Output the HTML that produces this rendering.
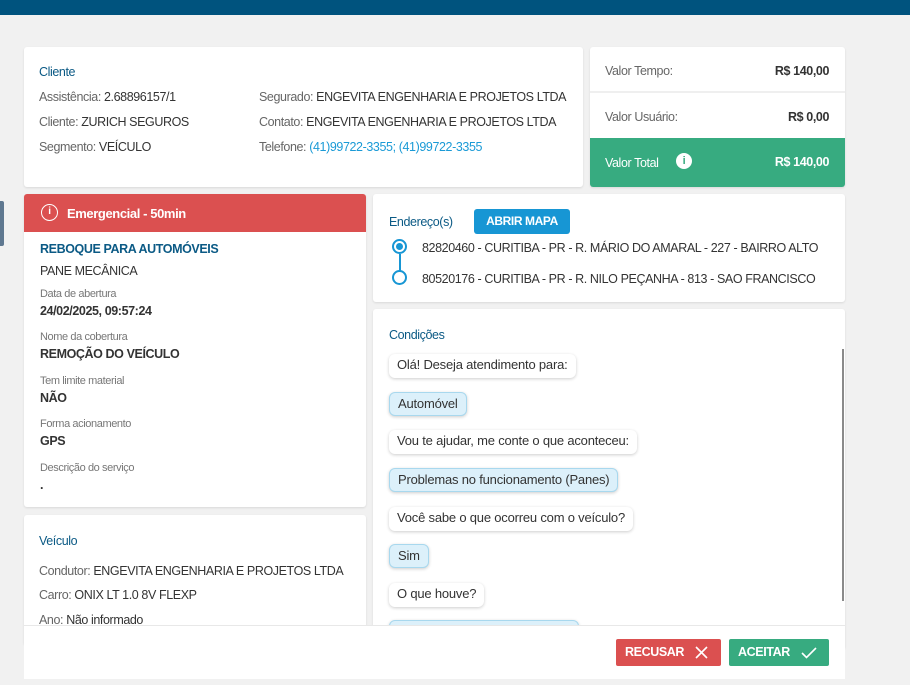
<!DOCTYPE html>
<html><head><meta charset="utf-8"><style>
*{box-sizing:border-box;margin:0;padding:0}
body{width:910px;height:685px;overflow:hidden;background:#f1f1f1;font-family:"Liberation Sans",sans-serif;font-size:12.5px;color:#333;position:relative;letter-spacing:-0.4px}
.card{position:absolute;background:#fff;border-radius:3px;box-shadow:0 1px 2px rgba(0,0,0,.1)}
.t{color:#0b5a85;font-size:12.5px;position:absolute}
.l{color:#666}
.abs{position:absolute;white-space:nowrap}
.lnk{color:#1a9ad6}
.small{font-size:11px;color:#777}
.b{font-weight:bold;color:#333}
.bub{position:absolute;left:16px;height:24px;line-height:22px;padding:0 8px;border-radius:6px;background:#fff;box-shadow:0 1px 3px rgba(0,0,0,.2);white-space:nowrap;font-size:13px;letter-spacing:-0.2px}
.bub.a{background:#dcf0fa;border:1px solid #a8d8ee}
</style></head><body>
<div style="position:absolute;left:0;top:0;width:910px;height:15px;background:#00537e"></div>
<div style="position:absolute;left:0;top:201px;width:4px;height:45px;background:#5f7890;border-radius:0 2px 2px 0"></div>

<div class="card" style="left:24px;top:47px;width:559px;height:140px">
<div class="t" style="left:15px;top:18px">Cliente</div>
<div class="abs" style="left:15px;top:43px"><span class="l">Assistência:</span> 2.68896157/1</div>
<div class="abs" style="left:15px;top:68px"><span class="l">Cliente:</span> ZURICH SEGUROS</div>
<div class="abs" style="left:15px;top:93px"><span class="l">Segmento:</span> VEÍCULO</div>
<div class="abs" style="left:235px;top:43px"><span class="l">Segurado:</span> ENGEVITA ENGENHARIA E PROJETOS LTDA</div>
<div class="abs" style="left:235px;top:68px"><span class="l">Contato:</span> ENGEVITA ENGENHARIA E PROJETOS LTDA</div>
<div class="abs" style="left:235px;top:93px"><span class="l">Telefone:</span> <span class="lnk">(41)99722-3355; (41)99722-3355</span></div>
</div>

<div class="card" style="left:590px;top:47px;width:255px;height:140px;overflow:hidden">
<div class="abs l" style="left:15px;top:17px">Valor Tempo:</div>
<div class="abs b" style="right:16px;top:17px">R$ 140,00</div>
<div style="position:absolute;left:0;top:44px;width:255px;height:2px;background:#efefef"></div>
<div class="abs l" style="left:15px;top:63px">Valor Usuário:</div>
<div class="abs b" style="right:16px;top:63px">R$ 0,00</div>
<div style="position:absolute;left:0;top:91px;width:255px;height:49px;background:#37ab80;color:#fff">
<div class="abs" style="left:15px;top:18px">Valor Total</div>
<div class="abs" style="left:86px;top:15px;width:16px;height:16px;border-radius:50%;background:#fff;color:#37ab80;font-weight:bold;font-size:11px;text-align:center;line-height:16px">i</div>
<div class="abs" style="right:16px;top:17px;font-weight:bold">R$ 140,00</div>
</div></div>

<div class="card" style="left:24px;top:194px;width:342px;height:313px;overflow:hidden">
<div style="height:38px;background:#db5050;color:#fff;position:relative">
<div class="abs" style="left:17px;top:10px;width:17px;height:17px;border:1.5px solid #fff;border-radius:50%;font-size:10px;text-align:center;line-height:14px;font-weight:bold">i</div>
<div class="abs" style="left:43px;top:12px;font-weight:bold;font-size:13px">Emergencial - 50min</div></div>
<div class="abs" style="left:16px;top:48px;color:#0b5a85;font-weight:bold">REBOQUE PARA AUTOMÓVEIS</div>
<div class="abs" style="left:16px;top:70px">PANE MECÂNICA</div>
<div class="abs small" style="left:16px;top:94px">Data de abertura</div>
<div class="abs b" style="left:16px;top:110px">24/02/2025, 09:57:24</div>
<div class="abs small" style="left:16px;top:137px">Nome da cobertura</div>
<div class="abs b" style="left:16px;top:153px">REMOÇÃO DO VEÍCULO</div>
<div class="abs small" style="left:16px;top:181px">Tem limite material</div>
<div class="abs b" style="left:16px;top:197px">NÃO</div>
<div class="abs small" style="left:16px;top:224px">Forma acionamento</div>
<div class="abs b" style="left:16px;top:240px">GPS</div>
<div class="abs small" style="left:16px;top:268px">Descrição do serviço</div>
<div class="abs b" style="left:16px;top:284px">.</div>
</div>

<div class="card" style="left:24px;top:515px;width:342px;height:130px">
<div class="t" style="left:15px;top:19px">Veículo</div>
<div class="abs" style="left:15px;top:49px"><span class="l">Condutor:</span> ENGEVITA ENGENHARIA E PROJETOS LTDA</div>
<div class="abs" style="left:15px;top:73px"><span class="l">Carro:</span> ONIX LT 1.0 8V FLEXP</div>
<div class="abs" style="left:15px;top:98px"><span class="l">Ano:</span> Não informado</div>
</div>

<div class="card" style="left:373px;top:194px;width:472px;height:108px">
<div class="t" style="left:16px;top:21px">Endereço(s)</div>
<div class="abs" style="left:101px;top:15px;width:96px;height:25px;background:#1796d4;color:#fff;font-weight:bold;border-radius:3px;text-align:center;line-height:25px;font-size:12px">ABRIR MAPA</div>
<div class="abs" style="left:19px;top:45px;width:15px;height:15px;border:2px solid #1796d4;border-radius:50%"><div style="width:7px;height:7px;margin:2px;background:#1796d4;border-radius:50%"></div></div>
<div class="abs" style="left:26px;top:60px;width:2px;height:17px;background:#1796d4"></div>
<div class="abs" style="left:19px;top:76px;width:15px;height:15px;border:2px solid #1796d4;border-radius:50%"></div>
<div class="abs" style="left:49px;top:47px">82820460 - CURITIBA - PR - R. MÁRIO DO AMARAL - 227 - BAIRRO ALTO</div>
<div class="abs" style="left:49px;top:78px">80520176 - CURITIBA - PR - R. NILO PEÇANHA - 813 - SAO FRANCISCO</div>
</div>

<div class="card" style="left:373px;top:309px;width:472px;height:340px;overflow:hidden">
<div class="t" style="left:16px;top:19px">Condições</div>
<div class="bub" style="top:45px">Olá! Deseja atendimento para:</div>
<div class="bub a" style="top:83px">Automóvel</div>
<div class="bub" style="top:121px">Vou te ajudar, me conte o que aconteceu:</div>
<div class="bub a" style="top:159px">Problemas no funcionamento (Panes)</div>
<div class="bub" style="top:198px">Você sabe o que ocorreu com o veículo?</div>
<div class="bub a" style="top:235px">Sim</div>
<div class="bub" style="top:274px">O que houve?</div>
<div class="bub a" style="top:311px;width:190px">&nbsp;</div>
<div style="position:absolute;left:469px;top:40px;width:2px;height:252px;background:#8a8a8a"></div>
</div>

<div style="position:absolute;left:24px;top:625px;width:821px;height:54px;background:#fff;border-top:1px solid #e8e8e8">
<div class="abs" style="left:592px;top:13px;width:105px;height:27px;background:#db5050;color:#fff;border-radius:2px;font-weight:bold;line-height:27px;padding-left:9px;font-size:12.5px">RECUSAR
<svg style="position:absolute;left:79px;top:7px" width="13" height="13" viewBox="0 0 13 13"><path d="M1 1L12 12M12 1L1 12" stroke="#fff" stroke-width="1.6"/></svg></div>
<div class="abs" style="left:705px;top:13px;width:100px;height:27px;background:#37ab80;color:#fff;border-radius:2px;font-weight:bold;line-height:27px;padding-left:9px;font-size:12.5px">ACEITAR
<svg style="position:absolute;left:72px;top:7px" width="16" height="13" viewBox="0 0 16 13"><path d="M1 7L5.5 11.5L15 2" stroke="#fff" stroke-width="1.6" fill="none"/></svg></div>
</div>
</body></html>
